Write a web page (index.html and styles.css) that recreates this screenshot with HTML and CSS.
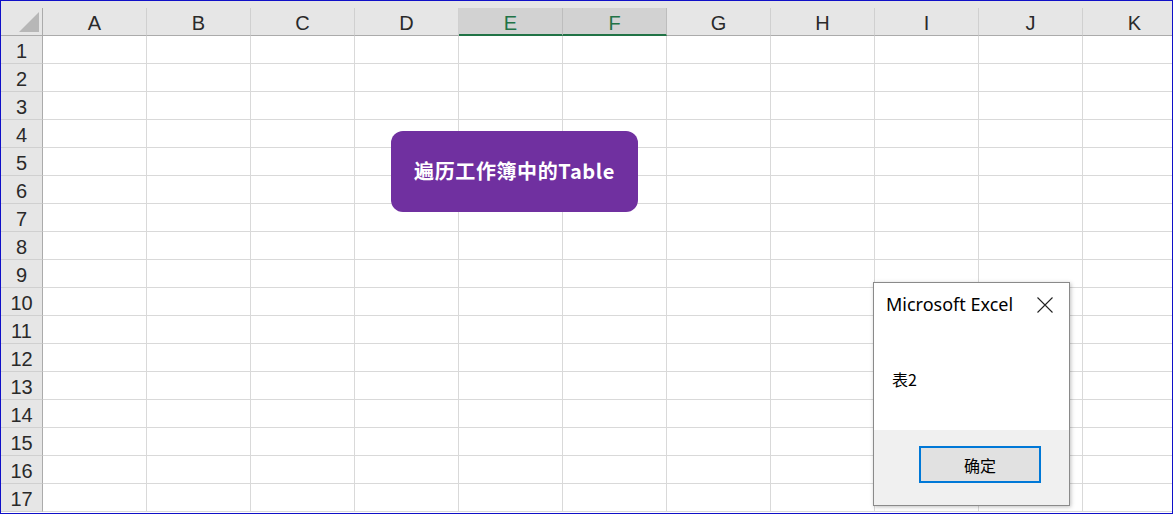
FILE: index.html
```html
<!DOCTYPE html>
<html>
<head>
<meta charset="utf-8">
<link rel="stylesheet" href="styles.css">
</head>
<body>
<div class="frame">
  <div class="topstrip"></div>
  <div class="sheet">
    <div class="corner"><span class="tri"></span></div>
    <div class="ch">A</div><div class="ch">B</div><div class="ch">C</div><div class="ch">D</div>
    <div class="ch sel">E</div><div class="ch sel">F</div>
    <div class="ch">G</div><div class="ch">H</div><div class="ch">I</div><div class="ch">J</div><div class="ch">K</div>
  </div>
  <div class="sheet" id="body"></div>

  <button class="macro">遍历工作簿中的Table</button>

  <div class="dialog">
    <div class="dtitle">
      <span>Microsoft Excel</span>
      <svg class="close" width="16" height="16" viewBox="0 0 16 16"><path d="M0.5 0.5 L15.5 15.5 M15.5 0.5 L0.5 15.5" stroke="#222" stroke-width="1.1" fill="none"/></svg>
    </div>
    <div class="dmsg">表2</div>
    <div class="dfoot"><button class="ok">确定</button></div>
  </div>
</div>
<script src="script.js"></script>
</body>
</html>
```
FILE: script.js
```js
var body = document.getElementById('body');
var html = '';
for (var r = 1; r <= 17; r++) {
  html += '<div class="rh">' + r + '</div>';
  for (var c = 0; c < 11; c++) html += '<div class="cell"></div>';
}
body.innerHTML = html;
```
FILE: styles.css
```css
html, body { margin: 0; padding: 0; background: #fff; }
.frame {
  width: 1173px; height: 514px; box-sizing: border-box;
  border: 1px solid #1010c8; position: relative; overflow: hidden;
  font-family: "Liberation Sans", Arial, sans-serif;
}
.topstrip { height: 7px; background: #e6e6e6; }
.sheet {
  display: grid;
  grid-template-columns: 42px repeat(11, 104px);
  grid-auto-rows: 28px;
}
.corner {
  background: #e6e6e6; border-right: 1px solid #ababab; border-bottom: 1px solid #ababab;
  box-sizing: border-box; position: relative;
}
.tri {
  position: absolute; right: 3px; bottom: 3px; width: 0; height: 0;
  border-left: 20px solid transparent; border-bottom: 20px solid #b7b7b7;
}
.ch {
  background: #e6e6e6; border-right: 1px solid #d0d0d0; border-bottom: 1px solid #ababab;
  box-sizing: border-box; display: flex; align-items: center; justify-content: center;
  font-size: 20px; color: #2a2a2a; padding-top: 4px;
}
.ch.sel { background: #d2d2d2; color: #217346; border-bottom: 2px solid #217346; border-right-color: #bdbdbd; padding-top: 5px; }
.rh {
  background: #e6e6e6; border-right: 1px solid #ababab; border-bottom: 1px solid #d0d0d0;
  box-sizing: border-box; display: flex; align-items: center; justify-content: center;
  font-size: 20px; color: #2a2a2a; padding-top: 4px;
}
.cell { border-right: 1px solid #d9d9d9; border-bottom: 1px solid #d9d9d9; box-sizing: border-box; }

.macro {
  position: absolute; left: 390px; top: 130px; width: 247px; height: 81px;
  background: #7030a0; color: #fff; border: none; border-radius: 12px;
  font-family: "Noto Sans CJK SC", "Noto Sans", sans-serif; font-weight: bold; font-size: 20px;
  padding: 0 0 2px 0; letter-spacing: 0.6px;
}
.dialog {
  position: absolute; left: 872px; top: 281px; width: 197px; height: 224px;
  box-sizing: border-box; border: 1px solid #8a8a8a; background: #fff;
  box-shadow: 1px 1px 4px rgba(0,0,0,0.25);
  display: flex; flex-direction: column;
  font-family: "Noto Sans CJK SC", sans-serif; color: #000;
}
.dtitle {
  height: 42px; display: flex; align-items: center; justify-content: space-between;
  padding: 0 16px 0 12px; font-family: "Noto Sans", "Open Sans", sans-serif; font-size: 18px;
}
.close { margin-top: 2px; }
.dmsg { flex: 1; padding: 42px 0 0 18px; font-size: 16px; }
.dfoot { height: 75px; background: #f0f0f0; display: flex; align-items: flex-start; justify-content: flex-end; padding: 16px 28px 0 0; box-sizing: border-box; }
.ok {
  width: 122px; height: 37px; box-sizing: border-box; background: #e1e1e1;
  border: 2px solid #0078d7; font-family: "Noto Sans CJK SC", sans-serif; font-size: 16px; color: #000; padding: 0;
}
```
